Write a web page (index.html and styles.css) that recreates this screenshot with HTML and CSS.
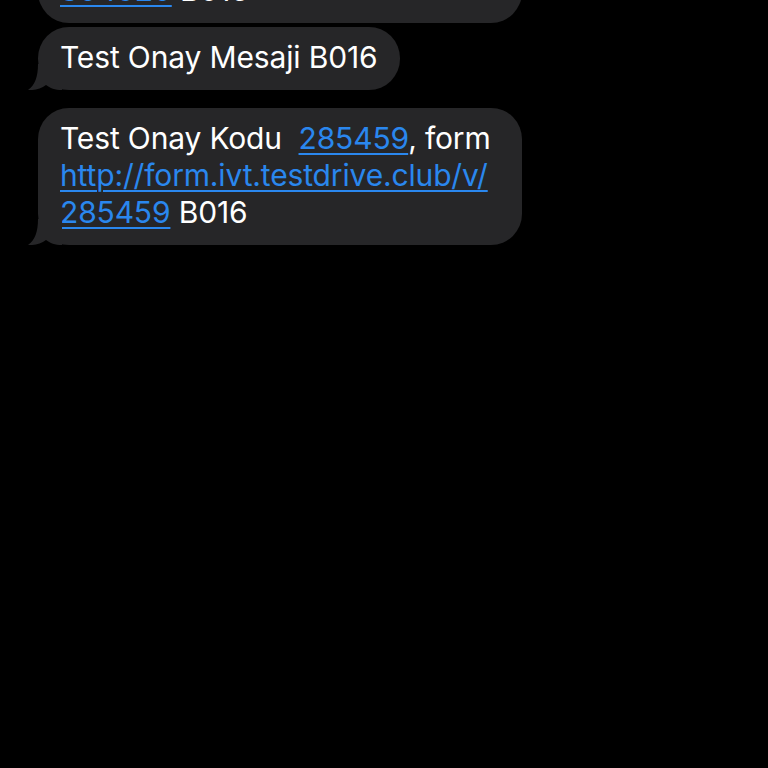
FILE: index.html
```html
<!DOCTYPE html>
<html lang="tr">
<head>
<meta charset="utf-8">
<title>Mesajlar</title>
<link rel="stylesheet" href="styles.css">
</head>
<body>
<main class="thread">
  <div class="group">
    <div class="bubble wide">
      <span class="line">Test Onay Kodu&nbsp; <a class="link" href="#">304920</a>, form</span>
      <span class="line"><a class="link" href="#">http://form.ivt.testdrive.club/v/</a></span>
      <span class="line"><a class="link" href="#">304920</a> B016</span>
    </div>
    <div class="bubble">
      <span class="line">Test Onay Mesaji B016</span>
      <svg class="tail" viewBox="0 0 34 26" width="34" height="26" aria-hidden="true"><path d="M10 0 C10 13 7 21 0 26 C7 26.5 13 24.5 18 21 C22 24 27 26 34 26 L34 0 Z"/></svg>
    </div>
  </div>
  <div class="group">
    <div class="bubble wide">
      <span class="line">Test Onay Kodu&nbsp; <a class="link" href="#">285459</a>, form</span>
      <span class="line"><a class="link" href="#">http://form.ivt.testdrive.club/v/</a></span>
      <span class="line"><a class="link" href="#">285459</a> B016</span>
      <svg class="tail" viewBox="0 0 34 26" width="34" height="26" aria-hidden="true"><path d="M10 0 C10 13 7 21 0 26 C7 26.5 13 24.5 18 21 C22 24 27 26 34 26 L34 0 Z"/></svg>
    </div>
  </div>
</main>
</body>
</html>
```
FILE: styles.css
```css
html, body {
  margin: 0;
  padding: 0;
  background: #000;
  height: 100%;
  overflow: hidden;
}
body {
  font-family: Inter, "Noto Sans", "DejaVu Sans", sans-serif;
  color: #fff;
  -webkit-font-smoothing: antialiased;
}
.thread {
  display: flex;
  flex-direction: column;
  gap: 18px;
  padding-left: 38px;
  margin-top: -114px;
}
.group {
  display: flex;
  flex-direction: column;
  align-items: flex-start;
  gap: 4px;
}
.bubble {
  position: relative;
  background: #262628;
  border-radius: 31px;
  padding: 12px 23px 14px 22px;
  font-size: 30px;
  line-height: 37px;
  letter-spacing: -0.15px;
  white-space: nowrap;
  display: flex;
  flex-direction: column;
}
.wide {
  width: 484px;
  box-sizing: border-box;
}
.line {
  display: block;
}
.link {
  color: #2a87ee;
  text-decoration: underline;
  text-decoration-thickness: 2px;
  text-underline-offset: 4px;
}
.tail {
  position: absolute;
  left: -10px;
  bottom: 0;
  fill: #262628;
}
```
